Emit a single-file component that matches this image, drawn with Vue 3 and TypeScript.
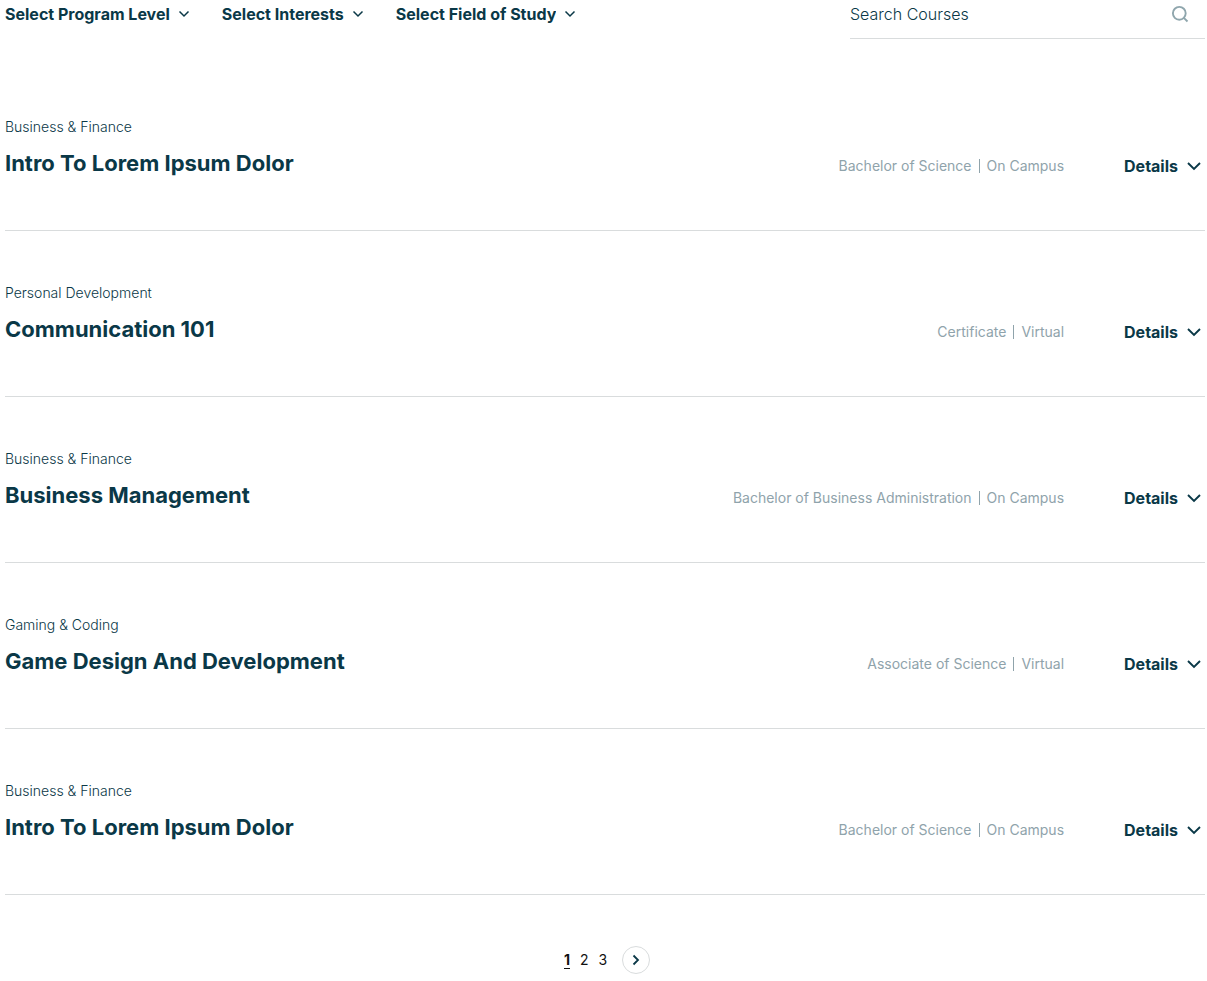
<script setup lang="ts">
import { ref } from 'vue'

interface Filter {
  id: string
  label: string
  options: string[]
}

interface Course {
  category: string
  title: string
  degree: string
  mode: string
}

const filters: Filter[] = [
  { id: 'level', label: 'Select Program Level', options: [] },
  { id: 'interests', label: 'Select Interests', options: [] },
  { id: 'field', label: 'Select Field of Study', options: [] },
]

const courses: Course[] = [
  { category: 'Business & Finance', title: 'Intro To Lorem Ipsum Dolor', degree: 'Bachelor of Science', mode: 'On Campus' },
  { category: 'Personal Development', title: 'Communication 101', degree: 'Certificate', mode: 'Virtual' },
  { category: 'Business & Finance', title: 'Business Management', degree: 'Bachelor of Business Administration', mode: 'On Campus' },
  { category: 'Gaming & Coding', title: 'Game Design And Development', degree: 'Associate of Science', mode: 'Virtual' },
  { category: 'Business & Finance', title: 'Intro To Lorem Ipsum Dolor', degree: 'Bachelor of Science', mode: 'On Campus' },
]

const pages = [1, 2, 3]
const current = ref(1)
const query = ref('')
</script>

<template>
  <main class="catalog">
    <form class="toolbar" @submit.prevent>
      <div class="filters">
        <div v-for="f in filters" :key="f.id" class="filter">
          <select :id="f.id" class="filter-select" :aria-label="f.label">
            <option value="">{{ f.label }}</option>
            <option v-for="o in f.options" :key="o">{{ o }}</option>
          </select>
          <svg class="filter-icon" width="12" height="8" viewBox="0 0 12 8" aria-hidden="true">
            <path d="M1.5 1.5 6 6l4.500-4.500" fill="none" stroke="currentColor" stroke-width="1.500" />
          </svg>
        </div>
      </div>
      <div class="search">
        <input v-model="query" class="search-input" type="text" placeholder="Search Courses" aria-label="Search Courses" />
        <button class="search-button" type="submit" aria-label="Search">
          <svg width="18" height="18" viewBox="0 0 18 18" aria-hidden="true">
            <circle cx="8.300" cy="8.300" r="6.400" fill="none" stroke="currentColor" stroke-width="1.900" />
            <path d="m12.800 12.800 3.700 3.700" fill="none" stroke="currentColor" stroke-width="1.900" />
          </svg>
        </button>
      </div>
    </form>

    <ul class="courses">
      <li v-for="(c, i) in courses" :key="i" class="course">
        <p class="category">{{ c.category }}</p>
        <div class="course-line">
          <h2 class="title">{{ c.title }}</h2>
          <p class="meta">
            <span>{{ c.degree }}</span><span class="divider"></span><span>{{ c.mode }}</span>
          </p>
          <button class="details" type="button">
            Details
            <svg width="14" height="10" viewBox="0 0 14 10" aria-hidden="true">
              <path d="m1 2 6 6 6-6" fill="none" stroke="currentColor" stroke-width="1.900" />
            </svg>
          </button>
        </div>
      </li>
    </ul>

    <nav class="pagination" aria-label="Pages">
      <a
        v-for="p in pages"
        :key="p"
        href="#"
        class="page"
        :class="{ active: p === current }"
        :aria-current="p === current ? 'page' : undefined"
        @click.prevent="current = p"
      >{{ p }}</a>
      <button class="next" type="button" aria-label="Next page" @click="current = Math.min(current + 1, pages.length)">
        <svg width="8" height="12" viewBox="0 0 8 12" aria-hidden="true">
          <path d="m1.500 1.500 4.500 4.500-4.500 4.500" fill="none" stroke="currentColor" stroke-width="1.800" />
        </svg>
      </button>
    </nav>
  </main>
</template>

<style>
body {
  margin: 0;
  background: #fff;
}
</style>

<style scoped>
.catalog {
  padding: 0 2px 0 5px;
  color: #0a3847;
  font-family: Inter, "Liberation Sans", sans-serif;
}
button,
select,
input {
  padding: 0;
  border: 0;
  background: none;
  color: inherit;
  font-family: inherit;
}
button,
select {
  cursor: pointer;
}
.toolbar {
  display: flex;
  justify-content: space-between;
  align-items: flex-start;
}
.filters {
  display: flex;
  gap: 32px;
  padding-top: 4px;
}
.filter {
  position: relative;
}
.filter-select {
  display: block;
  height: 20px;
  padding-right: 20px;
  appearance: none;
  field-sizing: content;
  font-size: 16px;
  font-weight: 700;
  line-height: 20px;
}
.filter-icon {
  position: absolute;
  top: 6px;
  right: 0;
  pointer-events: none;
}
.search {
  display: flex;
  width: 355px;
  height: 38px;
  align-items: flex-start;
  border-bottom: 1px solid #d9dcdd;
}
.search-input {
  flex: 1;
  min-width: 0;
  height: 28px;
  font-size: 16px;
  font-weight: 300;
}
.search-input::placeholder {
  color: #0a3847;
  opacity: 1;
}
.search-button {
  display: flex;
  height: 28px;
  align-items: center;
  margin-right: 16px;
  color: #8fa6ad;
}
.courses {
  margin: 26px 0 0;
  padding: 0;
  list-style: none;
}
.course {
  padding: 52px 0 51px;
  border-bottom: 1px solid #d9dcdd;
}
.category {
  margin: 0;
  font-size: 14px;
  font-weight: 300;
  line-height: 20px;
}
.course-line {
  display: flex;
  align-items: flex-end;
  margin-top: 10px;
}
.title {
  flex: 1;
  margin: 0;
  font-size: 22px;
  font-weight: 700;
  line-height: 32px;
  align-self: flex-start;
}
.meta {
  display: flex;
  align-items: center;
  gap: 7px;
  margin: 0;
  color: #8fa3ab;
  font-size: 14px;
  line-height: 26px;
}
.divider {
  width: 1px;
  height: 14px;
  background: currentColor;
}
.details {
  display: flex;
  align-items: center;
  gap: 9px;
  margin: 0 4px 0 60px;
  font-size: 16px;
  font-weight: 700;
  line-height: 26px;
}
.pagination {
  display: flex;
  justify-content: center;
  align-items: center;
  gap: 10px;
  padding: 51px 0 7px 4px;
}
.page {
  color: #111;
  font-size: 14px;
  line-height: 16px;
  text-decoration: none;
  border-bottom: 1px solid transparent;
}
.active {
  border-color: #111;
  font-weight: 700;
}
.next {
  display: flex;
  width: 28px;
  height: 28px;
  align-items: center;
  justify-content: center;
  margin-left: 5px;
  border: 1px solid #d9dcdd;
  border-radius: 50%;
}
</style>
